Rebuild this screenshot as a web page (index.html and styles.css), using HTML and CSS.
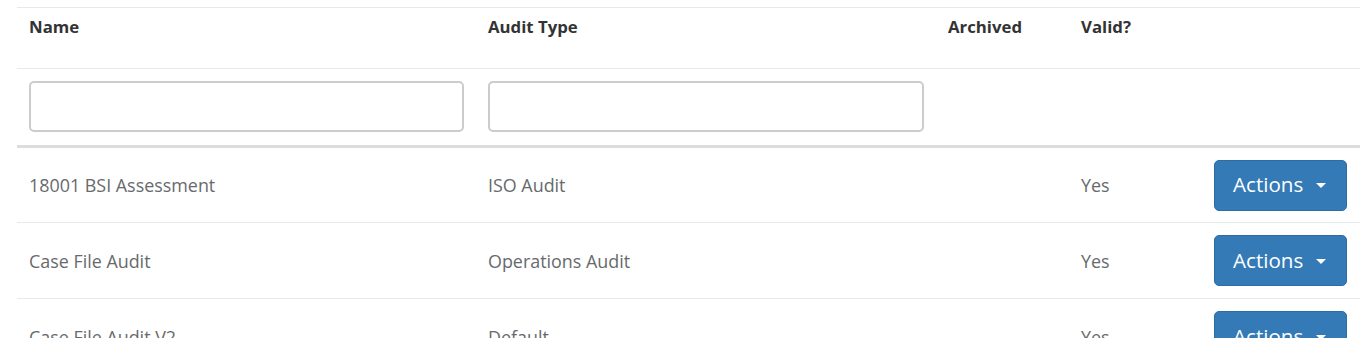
FILE: index.html
```html
<!DOCTYPE html>
<html>
<head>
<meta charset="utf-8">
<link rel="stylesheet" href="styles.css">
</head>
<body>
<div class="wrap">
<table class="grid">
  <colgroup>
    <col class="c-name"><col class="c-type"><col class="c-arch"><col class="c-valid"><col class="c-act">
  </colgroup>
  <thead>
    <tr class="head">
      <th>Name</th><th>Audit Type</th><th>Archived</th><th>Valid?</th><th></th>
    </tr>
    <tr class="filters">
      <th><input class="filter" type="text"></th>
      <th><input class="filter" type="text"></th>
      <th></th><th></th><th></th>
    </tr>
  </thead>
  <tbody>
    <tr>
      <td>18001 BSI Assessment</td><td>ISO Audit</td><td></td><td>Yes</td>
      <td><button class="btn">Actions<span class="caret"></span></button></td>
    </tr>
    <tr>
      <td>Case File Audit</td><td>Operations Audit</td><td></td><td>Yes</td>
      <td><button class="btn">Actions<span class="caret"></span></button></td>
    </tr>
    <tr>
      <td>Case File Audit V2</td><td>Default</td><td></td><td>Yes</td>
      <td><button class="btn">Actions<span class="caret"></span></button></td>
    </tr>
  </tbody>
</table>
</div>
</body>
</html>
```
FILE: styles.css
```css
html, body {
  margin: 0;
  padding: 0;
  background: #fff;
  font-family: "Open Sans", "Liberation Sans", sans-serif;
  overflow: hidden;
}
.wrap {
  padding: 7px 10px 0 17px;
}
.grid {
  width: 1343px;
  border-collapse: collapse;
  table-layout: fixed;
  border-top: 1px solid #e7eaec;
}
.c-name { width: 459px; }
.c-type { width: 460px; }
.c-arch { width: 133px; }
.c-valid { width: 133px; }
.c-act { width: 158px; }

.head th {
  text-align: left;
  font-weight: 700;
  font-size: 16.8px;
  line-height: 24px;
  color: #333;
  height: 61px;
  box-sizing: border-box;
  padding: 7px 12px 0;
  vertical-align: top;
  border-bottom: 1px solid #e7eaec;
}
.filters th {
  padding: 12px 12px 12px;
  border-bottom: 3px solid #ddd;
  vertical-align: top;
  height: 78px;
  box-sizing: border-box;
}
.filter {
  display: block;
  width: 100%;
  height: 51px;
  box-sizing: border-box;
  border: 2px solid #ccc;
  border-radius: 5px;
  background: #fff;
  margin: 0;
}
tbody td {
  height: 76px;
  box-sizing: border-box;
  padding: 0 12px;
  font-size: 17.9px;
  color: #676a6c;
  vertical-align: middle;
  border-bottom: 1px solid #e7eaec;
  white-space: nowrap;
}
.btn {
  display: inline-flex;
  align-items: center;
  width: 133px;
  height: 51px;
  box-sizing: border-box;
  padding: 0 0 2px 18px;
  background: #337ab7;
  border: 1px solid #2e6da4;
  border-radius: 5px;
  color: #fff;
  font-family: "Open Sans", "Liberation Sans", sans-serif;
  font-size: 20.6px;
  cursor: pointer;
}
.caret {
  display: inline-block;
  width: 0;
  height: 0;
  margin-left: 13px;
  margin-top: 3px;
  border-top: 5px solid #fff;
  border-left: 5px solid transparent;
  border-right: 5px solid transparent;
}
```
